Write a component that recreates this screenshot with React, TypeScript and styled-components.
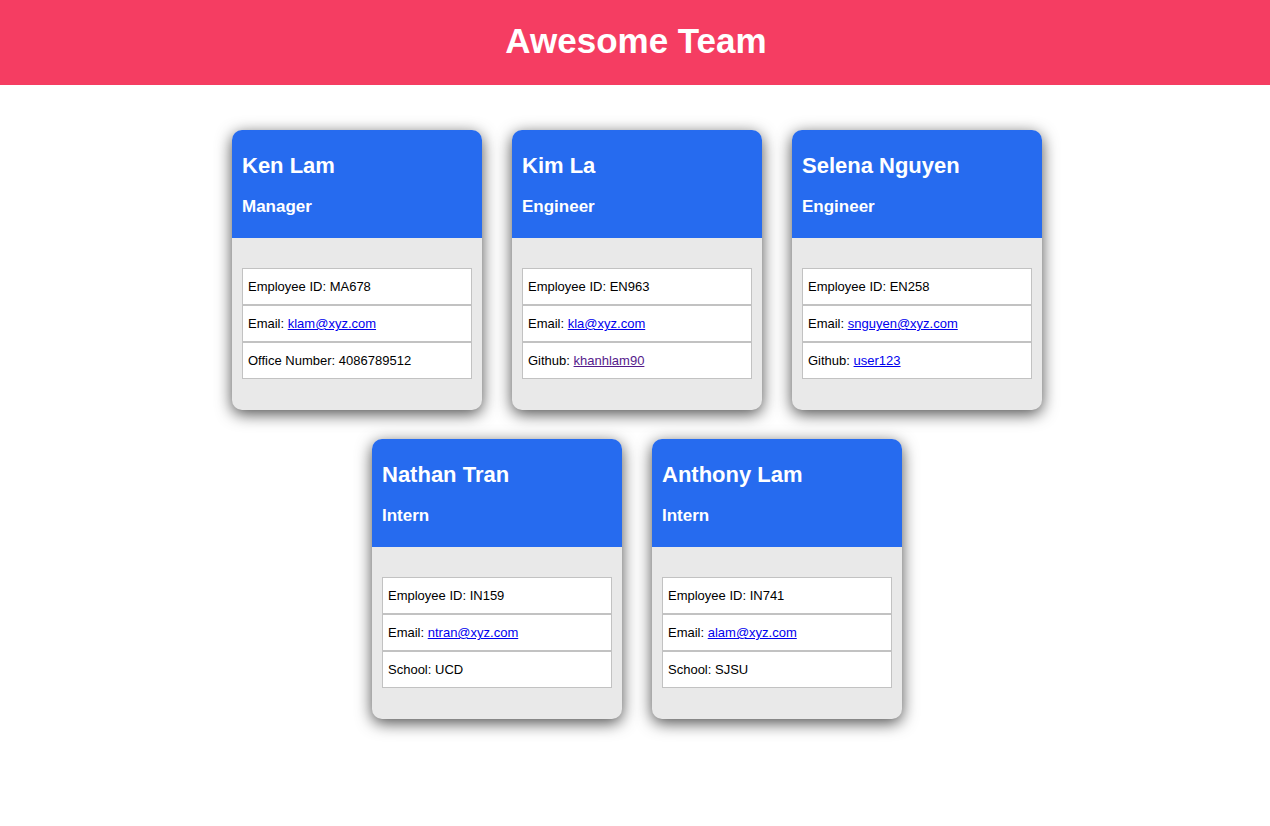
import React from 'react'
import styled, { createGlobalStyle } from 'styled-components'

type Member = {
  name: string
  role: string
  id: string
  email: string
  extra: { label: string; value: string; link?: boolean; visited?: boolean }
}

const team: Member[] = [
  { name: 'Ken Lam', role: 'Manager', id: 'MA678', email: 'klam@xyz.com', extra: { label: 'Office Number', value: '4086789512' } },
  { name: 'Kim La', role: 'Engineer', id: 'EN963', email: 'kla@xyz.com', extra: { label: 'Github', value: 'khanhlam90', link: true, visited: true } },
  { name: 'Selena Nguyen', role: 'Engineer', id: 'EN258', email: 'snguyen@xyz.com', extra: { label: 'Github', value: 'user123', link: true } },
  { name: 'Nathan Tran', role: 'Intern', id: 'IN159', email: 'ntran@xyz.com', extra: { label: 'School', value: 'UCD' } },
  { name: 'Anthony Lam', role: 'Intern', id: 'IN741', email: 'alam@xyz.com', extra: { label: 'School', value: 'SJSU' } },
]

const App: React.FC = () => {
  return (
    <>
      <GlobalStyle />
      <Header>
        <Title>Awesome Team</Title>
      </Header>
      <Team>
        {team.map((m) => (
          <Card key={m.id}>
            <CardHeader>
              <Name>{m.name}</Name>
              <Role>{m.role}</Role>
            </CardHeader>
            <CardBody>
              <List>
                <Item>Employee ID: {m.id}</Item>
                <Item>
                  Email: <Mail href={`mailto:${m.email}`}>{m.email}</Mail>
                </Item>
                <Item>
                  {m.extra.label}:{' '}
                  {m.extra.link ? <Mail href="#" $visited={m.extra.visited}>{m.extra.value}</Mail> : m.extra.value}
                </Item>
              </List>
            </CardBody>
          </Card>
        ))}
      </Team>
    </>
  )
}

export default App

const GlobalStyle = createGlobalStyle`
  html, body {
    margin: 0;
    padding: 0;
    background: #fff;
    font-family: "Liberation Sans", Arial, Helvetica, sans-serif;
  }
`

const Header = styled.header`
  height: 85px;
  box-sizing: border-box;
  padding-top: 21px;
  background: #f53d62;
  text-align: center;
`

const Title = styled.h1`
  margin: 0;
  padding-left: 2px;
  font-size: 35px;
  line-height: 40px;
  font-weight: 700;
  color: #fff;
`

const Team = styled.main`
  display: flex;
  flex-wrap: wrap;
  justify-content: center;
  column-gap: 30px;
  row-gap: 29px;
  width: 840px;
  margin: 45px auto 0;
  padding: 0 0 60px 4px;
`

const Card = styled.div`
  width: 250px;
  height: 280px;
  display: flex;
  flex-direction: column;
  border-radius: 10px;
  overflow: hidden;
  background: #e9e9e9;
  box-shadow: 0 4px 16px rgba(0, 0, 0, 0.7);
`

const CardHeader = styled.div`
  height: 108px;
  box-sizing: border-box;
  padding: 23px 10px 0;
  background: #266bef;
  color: #fff;
`

const Name = styled.h2`
  margin: 0 0 19px;
  font-size: 22px;
  line-height: 25px;
  font-weight: 700;
`

const Role = styled.h3`
  margin: 0;
  font-size: 17px;
  line-height: 20px;
  font-weight: 700;
`

const CardBody = styled.div`
  flex: 1;
  padding: 30px 10px;
`

const List = styled.ul`
  list-style: none;
  margin: 0;
  padding: 0;
  background: #fff;
`

const Item = styled.li`
  height: 37px;
  box-sizing: border-box;
  display: flex;
  align-items: center;
  white-space: pre;
  padding: 0 5px;
  border: 1px solid #c2c2c2;
  font-size: 13px;
  color: #000;
`

const Mail = styled.a<{ $visited?: boolean }>`
  color: ${({ $visited }) => ($visited ? '#551a8b' : '#0000ee')};
  text-decoration: underline;
`
